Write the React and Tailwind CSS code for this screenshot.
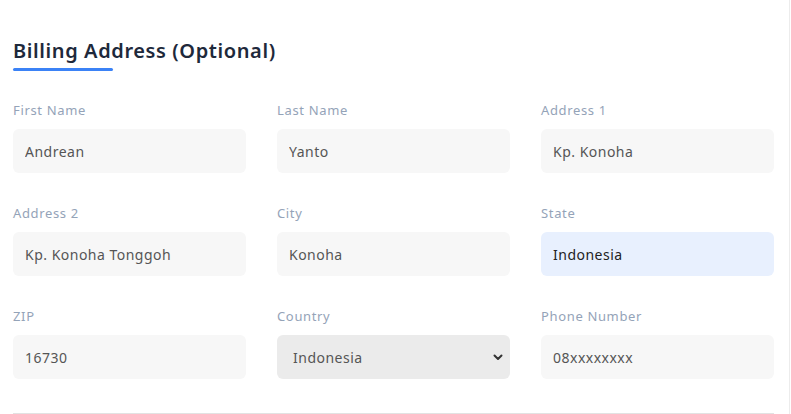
import React from "react";

const fields = [
  { label: "First Name", value: "Andrean" },
  { label: "Last Name", value: "Yanto" },
  { label: "Address 1", value: "Kp. Konoha" },
  { label: "Address 2", value: "Kp. Konoha Tonggoh" },
  { label: "City", value: "Konoha" },
  { label: "State", value: "Indonesia", autofill: true },
  { label: "ZIP", value: "16730" },
  { label: "Country", value: "Indonesia", select: true },
  { label: "Phone Number", value: "08xxxxxxxx" },
];

function Field({ label, value, autofill, select }) {
  return (
    <div className="flex flex-col">
      <label className="text-[13px] leading-5 tracking-[0.05em] text-[#94a3b8] mb-[9px]">{label}</label>
      {select ? (
        <div className="relative">
          <select
            defaultValue={value}
            className="w-full h-[44px] appearance-none rounded-md bg-[#ebebeb] pl-4 pr-8 text-[14px] tracking-[0.035em] text-[#555] outline-none"
          >
            <option>Indonesia</option>
            <option>Malaysia</option>
            <option>Singapore</option>
          </select>
          <svg
            className="pointer-events-none absolute right-[7px] top-1/2 -translate-y-1/2"
            width="10"
            height="10"
            viewBox="0 0 10 10"
          >
            <path d="M1.5 3.5 L5 7 L8.5 3.5" fill="none" stroke="#333" strokeWidth="2" strokeLinecap="round" strokeLinejoin="round" />
          </svg>
        </div>
      ) : (
        <input
          defaultValue={value}
          className={
            autofill
              ? "h-[44px] rounded-md bg-[#e8f0fe] px-3 text-[14px] tracking-[0.035em] text-[#222] outline-none"
              : "h-[44px] rounded-md bg-[#f7f7f7] px-3 text-[14px] tracking-[0.035em] text-[#555] outline-none"
          }
        />
      )}
    </div>
  );
}

export default function App() {
  return (
    <div
      className="w-[790px] min-h-[414px] bg-white border-r border-[#ececec]"
      style={{ fontFamily: '"Noto Sans", "Open Sans", sans-serif' }}
    >
      <div className="pl-[13px] pr-[15px] pt-[37px]">
        <h2 className="text-[20px] leading-7 font-semibold tracking-[0.03em] text-[#1e293b]">
          Billing Address (Optional)
        </h2>
        <div className="mt-[3px] h-[3px] w-[100px] rounded-full bg-[#3b82f6]" />
        <div className="mt-[29px] grid grid-cols-3 gap-x-[31px] gap-y-[30px]">
          {fields.map((f) => (
            <Field key={f.label} {...f} />
          ))}
        </div>
        <div className="mt-[34px] h-px bg-[#e2e2e2]" />
      </div>
    </div>
  );
}
